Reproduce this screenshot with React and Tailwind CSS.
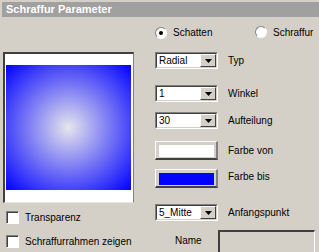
import React from 'react'

const sunken = 'border-t border-l border-t-[#808080] border-l-[#808080] border-b border-r border-b-white border-r-white'

const Select = ({ value }) => (
    <div className={`${sunken} w-[63px] h-[17px] flex`}>
        <div className="flex-1 flex border-t border-l border-t-[#404040] border-l-[#404040] border-b border-r border-b-[#d4d0c8] border-r-[#d4d0c8] bg-white">
            <span className="flex-1 pl-[2px] leading-[13px] text-black">{value}</span>
            <div className="w-[16px] h-full bg-[#d4d0c8] flex items-center justify-center border-t border-l border-t-white border-l-white border-b border-r border-b-[#404040] border-r-[#404040]">
                <svg width="7" height="4" viewBox="0 0 7 4"><polygon points="0,0 7,0 3.5,4" fill="#000" /></svg>
            </div>
        </div>
    </div>
)

const Radio = ({ checked, label }) => (
    <div className="flex items-center gap-[6px]">
        <div className={`w-[12px] h-[12px] rounded-full ${sunken} bg-white flex items-center justify-center`}>
            {checked && <div className="w-[4px] h-[4px] rounded-full bg-black" />}
        </div>
        <span>{label}</span>
    </div>
)

const Check = ({ label }) => (
    <div className="flex items-center gap-[6px] h-[13px]">
        <div className={`w-[13px] h-[13px] ${sunken} bg-white`}>
            <div className="w-full h-full border-t border-l border-t-[#404040] border-l-[#404040]" />
        </div>
        <span>{label}</span>
    </div>
)

const ColorButton = ({ color }) => (
    <div className="w-[63px] h-[19px] border-t border-l border-t-white border-l-white border-b-2 border-r-2 border-b-[#404040] border-r-[#808080] p-[3px] pb-[1px] pr-[2px]">
        <div className={`w-full h-full ${color}`} />
    </div>
)

export default function App() {
    return (
        <div className="w-[319px] h-[252px] bg-[#d4d0c8] overflow-hidden text-[10px] leading-[13px] text-black" style={{ fontFamily: '"Liberation Sans", Arial, sans-serif' }}>
            {/* title */}
            <div className="mt-[2px] ml-[2px] h-[15px] bg-[#a0a0a0] text-white font-bold text-[11px] pl-[4px] leading-[15px]">
                Schraffur Parameter
            </div>

            <div className="flex">
                {/* left column */}
                <div className="w-[152px] pl-[3px]">
                    <div className="mt-[35px] w-[131px] h-[151px] bg-white border-t-2 border-l-2 border-t-[#404040] border-l-[#404040] border-b border-r border-b-[#e8e8e8] border-r-[#808080] pt-[11px] pl-[1px]">
                        <div className="w-[125px] h-[125px] bg-[radial-gradient(circle,#e6e6ec_0%,#a0a0f2_30%,#0000ff_100%)]" />
                    </div>
                    <div className="mt-[8px] pl-[3px] flex flex-col gap-[11px]">
                        <Check label="Transparenz" />
                        <Check label="Schraffurrahmen zeigen" />
                    </div>
                </div>

                {/* right column */}
                <div className="flex-1 pl-[3px]">
                    <div className="mt-[9px] flex h-[12px]">
                        <div className="w-[100px]"><Radio checked label="Schatten" /></div>
                        <Radio label="Schraffur" />
                    </div>
                    <div className="mt-[14px] flex items-center gap-[10px]">
                        <Select value="Radial" /><span>Typ</span>
                    </div>
                    <div className="mt-[16px] flex items-center gap-[10px]">
                        <Select value="1" /><span>Winkel</span>
                    </div>
                    <div className="mt-[10px] flex items-center gap-[10px]">
                        <Select value="30" /><span>Aufteilung</span>
                    </div>
                    <div className="mt-[12px] flex items-center gap-[10px]">
                        <ColorButton color="bg-white" /><span>Farbe von</span>
                    </div>
                    <div className="mt-[9px] flex items-center gap-[10px]">
                        <ColorButton color="bg-[#0000ff]" /><span className="-mt-[4px]">Farbe bis</span>
                    </div>
                    <div className="mt-[16px] flex items-center gap-[10px]">
                        <Select value="5_Mitte" /><span>Anfangspunkt</span>
                    </div>
                    <div className="mt-[9px] flex">
                        <span className="w-[63px] pl-[20px] pt-[4px]">Name</span>
                        <div className="w-[97px] h-[24px] border-t-2 border-l-2 border-t-[#404040] border-l-[#404040] border-b border-r border-b-white border-r-white" />
                    </div>
                </div>
            </div>
        </div>
    )
}
